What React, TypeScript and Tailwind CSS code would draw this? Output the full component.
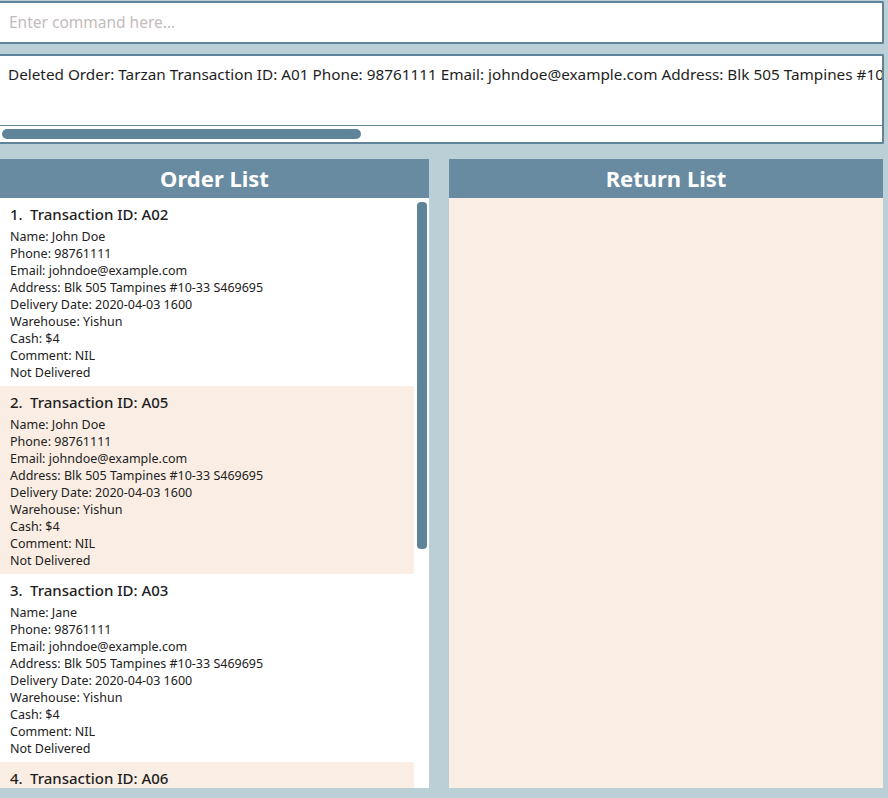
import React from "react";

type Order = { id: string; name: string };

const orders: Order[] = [
  { id: "A02", name: "John Doe" },
  { id: "A05", name: "John Doe" },
  { id: "A03", name: "Jane" },
  { id: "A06", name: "John Doe" },
];

function OrderCard({ o, i }: { o: Order; i: number }) {
  const bg = i % 2 === 0 ? "bg-white" : "bg-[#faeee4]";
  return (
    <div className={`${bg} h-[188px] shrink-0 pl-[10px] pt-[6px] overflow-hidden`}>
      <div className="flex text-[15px] font-medium text-[#222] leading-[20px]">
        <span className="w-[20px]">{i + 1}.</span>
        <span>Transaction ID: {o.id}</span>
      </div>
      <div className="text-[12.5px] text-[#222] leading-[17px] mt-[4px]">
        <div>Name: {o.name}</div>
        <div>Phone: 98761111</div>
        <div>Email: johndoe@example.com</div>
        <div>Address: Blk 505 Tampines #10-33 S469695</div>
        <div>Delivery Date: 2020-04-03 1600</div>
        <div>Warehouse: Yishun</div>
        <div>Cash: $4</div>
        <div>Comment: NIL</div>
        <div>Not Delivered</div>
      </div>
    </div>
  );
}

export default function App() {
  return (
    <div
      className="w-[888px] h-[798px] bg-[#bbcfd6] flex flex-col pt-[1px] overflow-hidden"
      style={{ fontFamily: '"Noto Sans", "Open Sans", sans-serif' }}
    >
      <div className="h-[43px] mr-[4px] bg-white border-y-[2px] border-r-[2px] border-[#5f8399] rounded-r-[2px] flex items-center pl-[9px] pt-[1px] text-[15.5px] text-[#c4bcbc]">
        Enter command here...
      </div>
      <div className="mt-[10px] h-[90px] mr-[4px] bg-white border-y-[2px] border-r-[2px] border-[#5f8399] rounded-r-[2px] flex flex-col">
        <div className="h-[70px] border-b border-[#5f8399] pl-[8px] pt-[7px] text-[15.3px] text-[#1e1e1e] whitespace-nowrap overflow-hidden">
          Deleted Order: Tarzan Transaction ID: A01 Phone: 98761111 Email: johndoe@example.com Address: Blk 505 Tampines #10-33 S469695
        </div>
        <div className="flex-1 flex items-center pl-[2px]">
          <div className="w-[359px] h-[10px] rounded-[5px] bg-[#5f8399]" />
        </div>
      </div>
      <div className="mt-[15px] h-[629px] flex gap-[20px]">
        <div className="w-[429px] flex flex-col">
          <div className="h-[39px] bg-[#688ba1] flex items-center justify-center text-white text-[22px] font-bold">
            Order List
          </div>
          <div className="flex-1 flex bg-white overflow-hidden">
            <div className="w-[414px] flex flex-col overflow-hidden">
              {orders.map((o, i) => (
                <OrderCard key={o.id} o={o} i={i} />
              ))}
            </div>
            <div className="flex-1 pt-[4px] pl-[3px]">
              <div className="w-[10px] h-[347px] rounded-[4px] bg-[#5f8399]" />
            </div>
          </div>
        </div>
        <div className="w-[434px] flex flex-col">
          <div className="h-[39px] bg-[#688ba1] flex items-center justify-center text-white text-[22px] font-bold">
            Return List
          </div>
          <div className="flex-1 bg-[#faeee4]" />
        </div>
      </div>
    </div>
  );
}
